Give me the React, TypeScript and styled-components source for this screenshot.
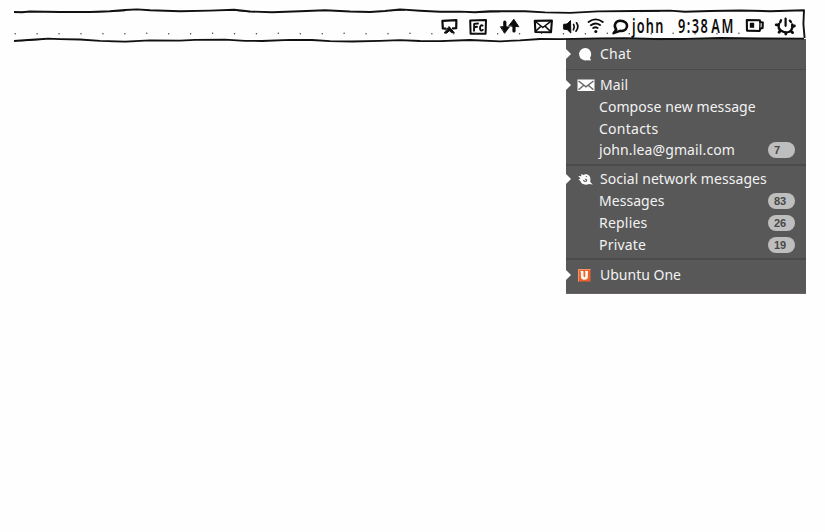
import React from 'react';
import styled, { createGlobalStyle } from 'styled-components';

const GlobalStyle = createGlobalStyle`
  * { box-sizing: border-box; }
  body { margin: 0; background: #fefefe; }
`;

const Page = styled.div`
  width: 825px;
  height: 532px;
  overflow: hidden;
  background: #fefefe;
  font-family: 'Noto Sans', sans-serif;
`;

const MenuBar = styled.header`
  position: relative;
  z-index: 1;
  height: 39px;
`;

const Outline = styled.svg`
  position: absolute;
  left: 0;
  top: 0;
  width: 825px;
  height: 46px;
`;

const Indicators = styled.div`
  display: flex;
  align-items: flex-start;
  padding: 14px 0 0 440px;
`;

const Slot = styled.div<{ $w: number }>`
  flex: none;
  width: ${(p) => p.$w}px;
  height: 24px;
`;

const Icon = styled.svg`
  display: block;
  overflow: visible;
  fill: none;
  stroke: #0c0c0c;
  stroke-width: 2.2;
  stroke-linecap: round;
  stroke-linejoin: round;
`;

const HandText = styled.span<{ $scale: number; $gap: number; $word?: number }>`
  display: inline-block;
  font-weight: 600;
  font-size: 19px;
  line-height: 25px;
  letter-spacing: ${(p) => p.$gap}px;
  word-spacing: ${(p) => p.$word ?? 0}px;
  white-space: pre;
  color: #0c0c0c;
  transform: scaleX(${(p) => p.$scale});
  transform-origin: left center;
`;

const Menu = styled.nav`
  width: 240px;
  height: 255px;
  margin-left: 566px;
  background: #585858;
  border-bottom: 1px solid #6b6267;
`;

const Section = styled.section<{ $h: number }>`
  height: ${(p) => p.$h}px;
  border-bottom: 2px solid #4b4b4b;
  &:first-child { border-bottom-width: 1px; }
  &:last-child { border-bottom: 0; }
`;

const Heading = styled.div<{ $h: number; $pad: number }>`
  display: flex;
  align-items: center;
  height: ${(p) => p.$h}px;
  padding-top: ${(p) => p.$pad}px;
`;

const Marker = styled.svg`
  flex: none;
  width: 5px;
  height: 12px;
  fill: #fefefe;
`;

const Glyph = styled.svg`
  flex: none;
  width: 18px;
  height: 16px;
  margin: 0 5px 0 6px;
`;

const Row = styled.div<{ $h?: number }>`
  display: flex;
  align-items: center;
  justify-content: space-between;
  height: ${(p) => p.$h ?? 22}px;
  padding: 0 11px 0 33px;
`;

const Label = styled.span<{ $gap?: number }>`
  font-size: 14px;
  line-height: 20px;
  letter-spacing: ${(p) => p.$gap ?? 0}px;
  white-space: nowrap;
  color: #f2f2f2;
`;

const Badge = styled.span`
  width: 27px;
  height: 16px;
  padding-left: 6px;
  border-radius: 8px;
  background: #bebebe;
  color: #484848;
  font: bold 11px/16px 'Liberation Sans', sans-serif;
`;

const TOP =
  'M14 12 L22 12.3 L30 11.5 L60 12 L90 12 L110 11.3 L125 10 L137 9.4 L150 10.2 L180 11.2 L210 10.6 L234 9.8 L250 11.5 L272 12.3 L300 11.2 L325 10.3 L350 11.5 L370 12 L385 11 L400 9.4 L420 10.7 L440 11.7 L460 11.6 L475 12.3 L490 11.3 L525 11.2 L545 12.4 L570 12.9 L598 11.4 L635 11 L670 10.6 L685 11.8 L710 11 L740 10.5 L770 11.2 L804 10.3 L803.4 24 L804.6 38';
const BOTTOM =
  'M14 41 L28 40 L48 38.7 L60 39.1 L80 39.5 L100 40.8 L125 41.7 L150 40.3 L180 40.7 L195 39.8 L225 39.7 L245 40.8 L262 41 L290 39.8 L312 40 L330 41.2 L352 41.5 L380 40.8 L400 40.2 L420 41 L440 41.2 L470 40 L500 41.3 L520 40.4 L540 39 L560 39.2 L600 38.3 L625 38.2 L655 39 L686 38.8 L720 38 L760 38.5 L804 38.6';

const dots = Array.from({ length: 34 }, (_, i) => ({ x: 15.2 + i * 21.93, y: i > 4 && i % 3 === 0 ? 33.2 : 33.7 }));

function Sketch() {
  return (
    <Outline viewBox="0 0 825 46" fill="none">
      <path d={TOP} stroke="#111" strokeWidth="1.9" strokeLinejoin="round" />
      <path d={BOTTOM} stroke="#111" strokeWidth="1.8" strokeLinejoin="round" />
      <path d="M15 12.6 L24 12 M95 12 L125 10.8 M235 10.4 L250 11.8 M390 10.8 L405 10.2 M480 12.2 L500 11.8 M640 11.6 L660 11.2 M20 40.8 L45 39.4 M110 41.6 L135 41.6 M420 41.5 L445 41.4 M655 39.6 L686 39.4" stroke="#111" strokeWidth="0.9" />
      {dots.map((d) => (
        <circle key={d.x} cx={d.x} cy={d.y} r="0.75" fill="#444" />
      ))}
    </Outline>
  );
}

const Screen = () => (
  <Icon width="28" height="24">
    <path d="M2.4 6.8 L16.4 6.2 L16.2 14.2 L13 14.4 M2.4 6.8 L2.8 14.4 L5.6 14.6" />
    <path d="M9.3 12.8 L14.3 18.7 L12 18.8 L9.4 16.8 L6.5 19.2 L4.6 19 Z" fill="#0c0c0c" strokeWidth="1" />
  </Icon>
);
const Fc = () => (
  <Icon width="32" height="24">
    <path d="M2.2 6.4 L18 6 L17.6 19.8 L2.6 19.7 Z" strokeWidth="2" />
    <path d="M6 16.8 L6.2 9.9 L10 9.5 M6.2 13.2 L9 12.8 M14.6 11.6 C13 10.6 12 12.4 12 14 C12 16.6 13.4 17.2 14.8 15.8" strokeWidth="1.9" />
  </Icon>
);
const Arrows = () => (
  <Icon width="33" height="24">
    <path d="M4.8 8 L4.8 14 M14 17 L14 10" strokeWidth="3.2" />
    <path d="M0.8 12.8 L9.2 13 L4.8 19 Z M9 11.6 L13.8 5.3 L18.6 12.4 Z" fill="#0c0c0c" strokeWidth="1" />
  </Icon>
);
const Envelope = () => (
  <Icon width="30" height="24">
    <path d="M1.8 6.9 L18.9 6.5 L18 18.2 L2.4 18 Z" strokeWidth="2.1" />
    <path d="M3 8 L9.8 13.5 L17.5 7.6 M3 17 L7.7 12.4 M17 17 L12.3 12.4" strokeWidth="1.5" />
  </Icon>
);
const Volume = () => (
  <Icon width="24" height="24">
    <path d="M1 10.3 L4 10 L7.5 6.6 L7.8 19 L4.2 15.6 L1 15.2 Z" fill="#0c0c0c" strokeWidth="1" />
    <path d="M10.6 10.4 Q12 13 10.4 15.8 M13.5 8.8 Q16.4 13 13 17.2" strokeWidth="1.7" />
  </Icon>
);
const Wifi = () => (
  <Icon width="25" height="24">
    <path d="M0.6 8 Q7.5 2.8 14.8 8 M2.9 11.3 Q7.5 7.9 12 11.1 M5.2 14 Q7.5 12.6 9.6 14" strokeWidth="1.9" />
    <circle cx="7.8" cy="17.4" r="1.5" fill="#0c0c0c" stroke="none" />
  </Icon>
);
const Bubble = () => (
  <Icon width="20" height="24">
    <path d="M5.2 15.4 C2.2 11.6 4.4 6.8 9.2 6.8 C14 6.8 16.8 9.8 15.8 13.2 C15 16.2 11.8 17.6 9 16.8 L2.6 19.2 L5.2 15.4" strokeWidth="2.5" />
  </Icon>
);
const Battery = () => (
  <Icon width="28" height="24">
    <path d="M1.8 6 L14.8 6.2 L15.2 8 L17.8 8.6 L17.6 14 L15.4 14.6 L14.6 17 L2 16.6 Z" strokeWidth="2.1" />
    <path d="M5.4 9.4 L8.6 9.4 L8.6 13.2 L5.4 13.2 Z" fill="#0c0c0c" strokeWidth="1.2" />
    <path d="M15 8 L14.8 14.6" strokeWidth="1.4" />
  </Icon>
);
const Power = () => (
  <Icon width="24" height="24">
    <path d="M7 6.2 L6.2 8.2 M5 10 C4 13 5 15.6 7.6 17 C11 19 15 18.6 17 16.4 C18.4 14.6 18.8 12 18.2 10.4 M15.8 6.6 L17 8" strokeWidth="2.3" />
    <path d="M11.6 4.6 L11.6 11.8" />
    <path d="M4.4 10.8 L2.2 10.8 M6.2 17 L5 18.2 M11.8 18.6 L11.8 20 M17 17.2 L18.6 18.6 M18.4 12 L20.4 12" strokeWidth="2.8" />
  </Icon>
);

function Head({ label, gap, h, pad = 0, children }: { label: string; gap?: number; h: number; pad?: number; children: React.ReactNode }) {
  return (
    <Heading $h={h} $pad={pad}>
      <Marker viewBox="0 0 5 12"><path d="M0 1 L5 6 L0 11 Z" /></Marker>
      <Glyph viewBox="0 0 18 16">{children}</Glyph>
      <Label $gap={gap}>{label}</Label>
    </Heading>
  );
}

function Item({ label, gap, count, h }: { label: string; gap?: number; count?: number; h?: number }) {
  return (
    <Row $h={h}>
      <Label $gap={gap}>{label}</Label>
      {count !== undefined && <Badge>{count}</Badge>}
    </Row>
  );
}

export default function App() {
  return (
    <Page>
      <GlobalStyle />
      <MenuBar>
        <Sketch />
        <Indicators>
          <Slot $w={28}><Screen /></Slot>
          <Slot $w={32}><Fc /></Slot>
          <Slot $w={33}><Arrows /></Slot>
          <Slot $w={30}><Envelope /></Slot>
          <Slot $w={25}><Volume /></Slot>
          <Slot $w={23}><Wifi /></Slot>
          <Slot $w={21}><Bubble /></Slot>
          <Slot $w={46}><HandText $scale={0.67} $gap={1.8}>john</HandText></Slot>
          <Slot $w={67}><HandText $scale={0.67} $gap={2.2} $word={-4}>9:38 AM</HandText></Slot>
          <Slot $w={29}><Battery /></Slot>
          <Slot $w={24}><Power /></Slot>
        </Indicators>
      </MenuBar>
      <Menu>
        <Section $h={31}>
          <Head label="Chat" h={30} gap={0.2}>
            <path d="M7.8 2 A6.2 6.2 0 0 1 13 11.8 L14 14.6 L9.8 14.2 A6.2 6.2 0 1 1 7.8 2 Z" fill="#fefefe" />
          </Head>
        </Section>
        <Section $h={96}>
          <Head label="Mail" h={26} pad={4} gap={0.1}>
            <rect x="0.5" y="2.5" width="17" height="11.5" fill="#fefefe" />
            <path d="M1.5 4 L9 9.8 L16.5 4 M1.5 12.8 L6.8 8.2 M16.5 12.8 L11.2 8.2" stroke="#666" strokeWidth="1.4" fill="none" />
          </Head>
          <Item label="Compose new message" gap={0.07} />
          <Item label="Contacts" h={21} gap={0.25} />
          <Item label="john.lea@gmail.com" count={7} gap={0.12} />
        </Section>
        <Section $h={94}>
          <Head label="Social network messages" h={24} pad={2} gap={0.08}>
            <path d="M1.2 5 L4.4 5.2 L4.2 3 L6.4 4 C9 2 13.6 4 13.4 8.4 L13.2 11 L15.8 13.6 L12 13 C8 14.6 4 13 3.4 10 L1.4 8.2 L3.6 7.8 Z" fill="#fefefe" />
            <path d="M6.4 9 C7 10.8 9.6 11 9.8 9 L8.2 8" stroke="#555" strokeWidth="1.1" fill="none" />
            <circle cx="9.4" cy="5.6" r="0.7" fill="#666" />
          </Head>
          <Item label="Messages" count={83} gap={0.05} />
          <Item label="Replies" count={26} gap={0.2} />
          <Item label="Private" count={19} h={21} gap={0.2} />
        </Section>
        <Section $h={33}>
          <Head label="Ubuntu One" h={30}>
            <rect x="1" y="2" width="12.5" height="12.5" fill="#e9632f" />
            <path d="M1 2.5 H13.5 M1.5 2 V14.5" stroke="#f0946c" />
            <path d="M5.2 4.2 V9 C5.2 12.4 9.6 12.4 9.6 9 V4.2" fill="none" stroke="#fff6ee" strokeWidth="2.6" />
            <path d="M3.6 4.6 H6 M8.2 4.6 H10.8" stroke="#fff6ee" strokeWidth="1.4" />
          </Head>
        </Section>
      </Menu>
    </Page>
  );
}
